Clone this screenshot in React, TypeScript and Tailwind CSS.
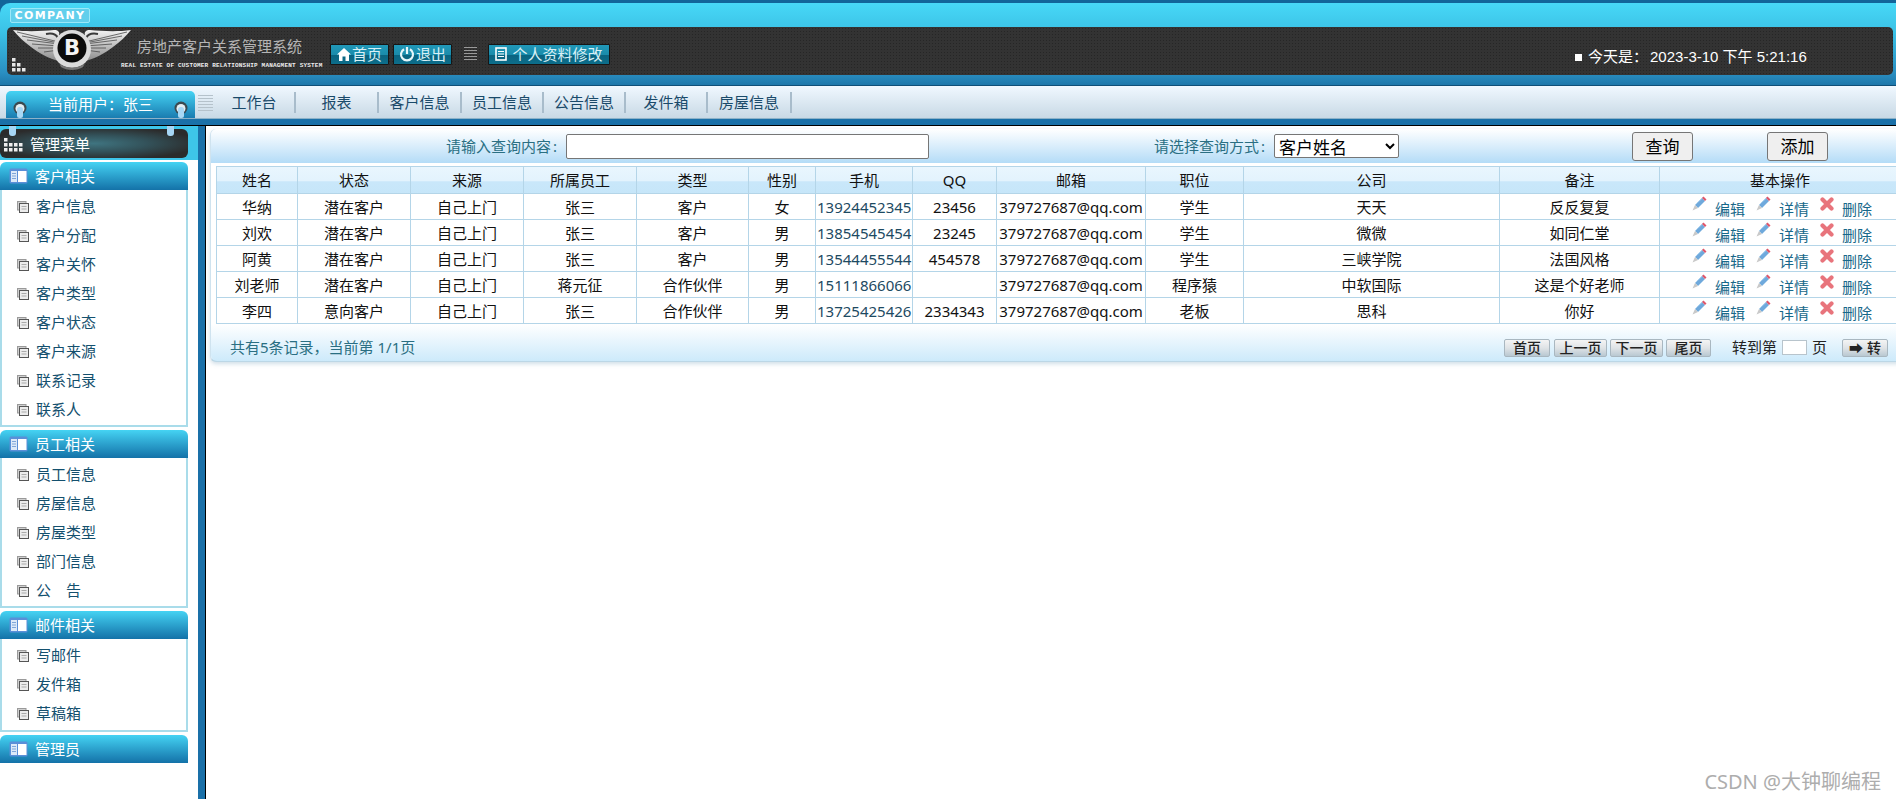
import React from "react"

const noise = "bg-[#333] bg-[radial-gradient(#262626_1px,transparent_1px)] bg-[length:3px_3px]"

const navItems = [
  { label: "工作台", w: "w-[82px]" },
  { label: "报表", w: "w-[83px]" },
  { label: "客户信息", w: "w-[83px]" },
  { label: "员工信息", w: "w-[82px]" },
  { label: "公告信息", w: "w-[82px]" },
  { label: "发件箱", w: "w-[82px]" },
  { label: "房屋信息", w: "w-[84px]" },
]

const menuGroups = [
  {
    title: "客户相关",
    body: "h-[237px] mb-[3px]",
    items: ["客户信息", "客户分配", "客户关怀", "客户类型", "客户状态", "客户来源", "联系记录", "联系人"],
  },
  {
    title: "员工相关",
    body: "h-[150px] mb-[3px]",
    items: ["员工信息", "房屋信息", "房屋类型", "部门信息", "公　告"],
  },
  {
    title: "邮件相关",
    body: "h-[93px] mb-[3px]",
    items: ["写邮件", "发件箱", "草稿箱"],
  },
]

const columns = [
  { label: "姓名", w: "w-[81px]" },
  { label: "状态", w: "w-[113px]" },
  { label: "来源", w: "w-[113px]" },
  { label: "所属员工", w: "w-[113px]" },
  { label: "类型", w: "w-[112px]" },
  { label: "性别", w: "w-[67px]" },
  { label: "手机", w: "w-[97px]" },
  { label: "QQ", w: "w-[84px]" },
  { label: "邮箱", w: "w-[149px]" },
  { label: "职位", w: "w-[98px]" },
  { label: "公司", w: "w-[256px]" },
  { label: "备注", w: "w-[160px]" },
  { label: "基本操作", w: "w-[241px]" },
]

const rows = [
  ["华纳", "潜在客户", "自己上门", "张三", "客户", "女", "13924452345", "23456", "379727687@qq.com", "学生", "天天", "反反复复"],
  ["刘欢", "潜在客户", "自己上门", "张三", "客户", "男", "13854545454", "23245", "379727687@qq.com", "学生", "微微", "如同仁堂"],
  ["阿黄", "潜在客户", "自己上门", "张三", "客户", "男", "13544455544", "454578", "379727687@qq.com", "学生", "三峡学院", "法国风格"],
  ["刘老师", "潜在客户", "自己上门", "蒋元征", "合作伙伴", "男", "15111866066", "", "379727687@qq.com", "程序猿", "中软国际", "这是个好老师"],
  ["李四", "意向客户", "自己上门", "张三", "合作伙伴", "男", "13725425426", "2334343", "379727687@qq.com", "老板", "思科", "你好"],
]

function Logo() {
  const feathers = [
    "M46 13 L4 3", "M46 14 L9 7", "M46 15 L14 11", "M46 17 L19 15", "M46 19 L25 19", "M46 21 L31 23",
  ]
  const wing = (
    <g>
      <path d="M0 1 C14 3 30 2 41 1 C45 1 47 3 46 6 L46 32 C36 30 26 24 18 18 C11 13 5 7 0 1 Z" fill="url(#wing)" />
      {feathers.map((d) => (
        <path key={d} d={d} stroke="#4a4a4a" strokeWidth="0.8" fill="none" />
      ))}
      <path d="M33 5 C38 4 43 5 45 9" stroke="#3a3a3a" strokeWidth="2" fill="none" />
    </g>
  )
  return (
    <svg width="118" height="44" viewBox="0 0 118 44" className="shrink-0 ml-[6px]">
      <defs>
        <linearGradient id="wing" x1="0" y1="0" x2="0" y2="1">
          <stop offset="0" stopColor="#f2f2f2" />
          <stop offset="1" stopColor="#8d8d8d" />
        </linearGradient>
      </defs>
      {wing}
      <g transform="translate(118 0) scale(-1 1)">{wing}</g>
      <circle cx="59" cy="20" r="19" fill="#dcdcdc" />
      <path d="M46 34 C52 40 66 40 72 34 L70 38 C64 42 54 42 48 38 Z" fill="#777" />
      <circle cx="59" cy="19" r="14.5" fill="#0b0b0b" />
      <text x="59" y="26" textAnchor="middle" fontSize="21" fontWeight="900" fill="#f4f4f4" fontFamily="'DejaVu Sans', sans-serif">
        B
      </text>
    </svg>
  )
}

function StairDots() {
  const cells = [[0, 0], [0, 5], [5, 5], [0, 10], [5, 10], [10, 10]]
  return (
    <svg width="14" height="14" viewBox="0 0 14 14" className="absolute left-[5px] bottom-[3px]">
      {cells.map(([x, y]) => (
        <rect key={`${x}-${y}`} x={x} y={y} width="3.5" height="3.5" fill="#e8e8e8" />
      ))}
    </svg>
  )
}

function Grip({ className }: { className: string }) {
  return <div className={`bg-[repeating-linear-gradient(to_bottom,var(--grip)_0px,var(--grip)_1px,transparent_1px,transparent_3px)] ${className}`} />
}

function HeadButton({ icon, label, w }: { icon: React.ReactNode; label: string; w: string }) {
  return (
    <div className={`${w} h-[21px] flex items-center justify-center gap-[1px] border border-[#161616] rounded-[1px] bg-[linear-gradient(to_bottom,#2198b8_0%,#1a8cab_50%,#0a6480_55%,#0d6e8b_100%)] text-[15px] leading-none text-[#d9f0f6]`}>
      {icon}
      <span>{label}</span>
    </div>
  )
}

function HomeIcon() {
  return (
    <svg width="14" height="13" viewBox="0 0 14 13">
      <path d="M7 0 L14 6.5 L12 6.5 L12 13 L8.5 13 L8.5 8.5 L5.5 8.5 L5.5 13 L2 13 L2 6.5 L0 6.5 Z" fill="#fff" />
    </svg>
  )
}

function PowerIcon() {
  return (
    <svg width="16" height="16" viewBox="0 0 16 16" fill="none" stroke="#e6f5f9" strokeWidth="2.2">
      <path d="M5 3.2 A6 6 0 1 0 11 3.2" />
      <path d="M8 1 L8 8" />
    </svg>
  )
}

function ListIcon() {
  return (
    <svg width="13" height="14" viewBox="0 0 13 14" className="mr-[3px]">
      <rect x="1" y="1" width="10" height="12" fill="none" stroke="#fff" strokeWidth="1.6" />
      <path d="M3 4.5 H9 M3 7 H9 M3 9.5 H9" stroke="#fff" strokeWidth="1.2" />
    </svg>
  )
}

function RingHook() {
  return (
    <svg width="16" height="17" viewBox="0 0 16 17">
      <circle cx="8" cy="7" r="6.5" fill="#3b4a50" />
      <circle cx="8" cy="7.5" r="4.5" fill="#e5eef2" />
      <rect x="5" y="6" width="6" height="11" rx="2.5" fill="#a9d8f4" />
    </svg>
  )
}

function SectionIcon() {
  return (
    <svg width="19" height="16" viewBox="0 0 19 16" className="shrink-0">
      <rect x="0.5" y="0.5" width="18" height="15" rx="1.5" fill="#5a8fd8" />
      <rect x="2" y="3" width="6" height="11" fill="#dce9f8" />
      <rect x="9" y="3" width="8.5" height="11" fill="#fff" />
      <path d="M3 5.5 H7 M3 8 H7 M3 10.5 H7" stroke="#7fa6d8" strokeWidth="1" />
    </svg>
  )
}

function PageIcon() {
  return (
    <svg width="12" height="12" viewBox="0 0 12 12" className="shrink-0">
      <rect x="0.5" y="0.5" width="8.5" height="8.5" fill="#d0d0d0" stroke="#9a9a9a" />
      <rect x="2.5" y="2.5" width="9" height="9" fill="#ececec" stroke="#555" />
      <path d="M4.5 5.5 H9.5 M4.5 8 H9.5" stroke="#aaa" strokeWidth="1" />
    </svg>
  )
}

function PencilIcon() {
  return (
    <svg width="15" height="15" viewBox="0 0 15 15" className="shrink-0 -mt-[6px]">
      <path d="M3 9 L10 2 L13 5 L6 12 Z" fill="#6fa9dc" />
      <path d="M5 7 L11 1.5" stroke="#a8d0f0" strokeWidth="1" />
      <path d="M10 2 L11.5 0.5 L14.5 3.5 L13 5 Z" fill="#e0566a" />
      <path d="M3 9 L6 12 L0.5 14.5 Z" fill="#c9c9c9" />
    </svg>
  )
}

function CrossIcon() {
  return (
    <svg width="14" height="14" viewBox="0 0 14 14" className="shrink-0 -mt-[6px]">
      <path d="M2.5 2.5 L11.5 11.5 M11.5 2.5 L2.5 11.5" stroke="#e8747c" strokeWidth="4.2" strokeLinecap="round" />
    </svg>
  )
}

function PagerButton({ children, w }: { children: React.ReactNode; w: string }) {
  return (
    <div className={`${w} h-[18px] flex items-center justify-center rounded-[2px] border border-[#a9b7c0] bg-[linear-gradient(to_bottom,#f4f4f4_0%,#dfe3e6_50%,#b9c8d2_100%)] text-[14px] leading-none font-medium text-[#222]`}>
      {children}
    </div>
  )
}

function GroupHead({ title }: { title: string }) {
  return (
    <div className="h-[28px] flex items-center pl-[9px] gap-[7px] rounded-t-[6px] bg-gradient-to-b from-[#45d3f3] to-[#1472a8] text-[15px] text-white">
      <SectionIcon />
      <span>{title}</span>
    </div>
  )
}

function Sidebar() {
  return (
    <aside className="w-[198px] shrink-0 bg-white">
      <div className="h-[34px] pt-[3px] bg-[#3ec5e9] relative">
        <div className="absolute left-[9px] top-0 w-[7px] h-[10px] rounded-b-[3px] bg-[#a6d6f5]" />
        <div className="absolute left-[167px] top-0 w-[7px] h-[10px] rounded-b-[3px] bg-[#a6d6f5]" />
        <div className="w-[188px] h-[29px] flex items-center rounded-[6px] pl-[4px] pt-[2px] bg-[#2b2b2b] bg-[radial-gradient(ellipse_at_center,#3f7480_0%,#33525a_40%,#2b2b2b_80%)] text-[15px] text-white">
          <svg width="20" height="14" viewBox="0 0 20 14" className="shrink-0">
            {[0, 5, 10].map((y) =>
              [0, 5, 10, 15].map((x) =>
                y === 0 && x > 0 ? null : <rect key={`${x}-${y}`} x={x} y={y} width="3.5" height="3.5" fill="#eee" />
              )
            )}
          </svg>
          <span className="ml-[6px]">管理菜单</span>
        </div>
      </div>
      <div className="w-[188px] pt-[2px]">
        {menuGroups.map((group) => (
          <div key={group.title}>
            <GroupHead title={group.title} />
            <ul className={`${group.body} border-x-2 border-b-2 border-[#a9dcea] bg-white pt-[2px]`}>
              {group.items.map((item) => (
                <li key={item} className="h-[29px] flex items-center pl-[15px] gap-[7px] text-[15px] text-[#14506e]">
                  <PageIcon />
                  <span>{item}</span>
                </li>
              ))}
            </ul>
          </div>
        ))}
        <GroupHead title="管理员" />
      </div>
    </aside>
  )
}

function CustomerTable() {
  return (
    <table className="w-[1684px] table-fixed border-collapse ml-[5px] text-[15px] leading-[20px] text-[#111]">
      <thead>
        <tr className="h-[27px] bg-[linear-gradient(to_bottom,#e9f6fe_0%,#e3f3fd_50%,#c9e7fa_55%,#c6e6f9_100%)]">
          {columns.map((col) => (
            <th key={col.label} className={`${col.w} border border-[#b4d5e8] font-normal text-center p-0`}>
              {col.label}
            </th>
          ))}
        </tr>
      </thead>
      <tbody>
        {rows.map((row) => (
          <tr key={row[0]} className="h-[26px] bg-white">
            {row.map((cell, i) => (
              <td
                key={i}
                className={
                  i === 6
                    ? "border border-[#b4d5e8] p-0 pl-[1px] whitespace-nowrap text-[#1d4a62]"
                    : "border border-[#b4d5e8] p-0 text-center whitespace-nowrap"
                }
              >
                {cell}
              </td>
            ))}
            <td className="border border-[#b4d5e8] p-0">
              <div className="h-[25px] flex items-center pl-[32px] text-[#17688a]">
                <PencilIcon />
                <span className="ml-[8px] mt-[5px]">编辑</span>
                <span className="ml-[11px] flex items-center"><PencilIcon /></span>
                <span className="ml-[8px] mt-[5px]">详情</span>
                <span className="ml-[11px] flex items-center"><CrossIcon /></span>
                <span className="ml-[8px] mt-[5px]">删除</span>
              </div>
            </td>
          </tr>
        ))}
      </tbody>
    </table>
  )
}

export default function App() {
  return (
    <div className="relative w-[1896px] h-[799px] overflow-hidden flex flex-col bg-white font-['Noto_Sans','Noto_Sans_CJK_SC',sans-serif]">
      {/* Header */}
      <header className="h-[86px] shrink-0 bg-[#12659a] pt-[3px] border-b border-[#0f4f78]">
        <div className="h-[82px] rounded-tl-[10px] px-[3px] bg-[linear-gradient(to_bottom,#47d8f7_0%,#3bc2e6_35%,#2a8fc2_85%,#1d77aa_100%)]">
          <div className="ml-[7px] pt-[5px]">
            <div className="w-[80px] h-[15px] flex items-center justify-center rounded-[2px] border border-[#9be8f9] bg-[#62cfec] text-[11px] leading-none font-bold tracking-[1.4px] text-white font-['DejaVu_Sans',sans-serif]">
              COMPANY
            </div>
          </div>
          <div className={`relative mt-[4px] ml-[4px] w-[1886px] h-[48px] flex items-center rounded-[5px] ${noise}`}>
            <StairDots />
            <Logo />
            <div className="w-[200px] ml-[-10px] shrink-0">
              <div className="pl-[16px] text-[15px] leading-[20px] text-[#b5b5b5] mt-[3px] whitespace-nowrap">房地产客户关系管理系统</div>
              <div className="mt-[6px] text-[6px] leading-[7px] font-bold tracking-[0.2px] text-[#eee] whitespace-nowrap font-['Liberation_Mono',monospace]">
                REAL ESTATE OF CUSTOMER RELATIONSHIP MANAGMENT SYSTEM
              </div>
            </div>
            <div className="ml-[9px] mt-[6px] flex items-center">
              <HeadButton icon={<HomeIcon />} label="首页" w="w-[59px]" />
              <div className="w-[4px]" />
              <HeadButton icon={<PowerIcon />} label="退出" w="w-[59px]" />
              <Grip className="[--grip:#9a9a9a] ml-[12px] w-[13px] h-[15px]" />
              <div className="w-[11px]" />
              <HeadButton icon={<ListIcon />} label="个人资料修改" w="w-[122px]" />
            </div>
            <div className="ml-[965px] mt-[12px] flex items-center text-[15px] text-white whitespace-nowrap font-['Liberation_Sans','Noto_Sans_CJK_SC',sans-serif]">
              <span className="w-[7px] h-[7px] bg-white mr-[6px] mt-[1px]" />
              <span>今天是：</span>
              <span className="ml-[2px]">2023-3-10 下午 5:21:16</span>
            </div>
          </div>
        </div>
      </header>

      {/* Nav bar */}
      <nav className="h-[33px] shrink-0 flex bg-gradient-to-b from-[#f0f8ff] to-[#c8d9e5] border-b border-[#8db2c8]">
        <div className="ml-[6px] mt-[5px] w-[189px] h-[27px] flex items-center justify-between px-[6px] rounded-t-[5px] bg-gradient-to-b from-[#45d3f3] to-[#1a7cb0] text-[15px] text-white">
          <span className="self-end"><RingHook /></span>
          <span>当前用户：张三</span>
          <span className="self-end"><RingHook /></span>
        </div>
        <Grip className="[--grip:#b5c2cb] ml-[3px] mt-[9px] w-[15px] h-[17px]" />
        <ul className="ml-[1px] flex items-center h-full text-[15px] text-[#1a4a6a]">
          {navItems.map((item) => (
            <li key={item.label} className={`${item.w} h-[21px] flex items-center justify-center border-r-2 border-[#a8bccb]`}>
              {item.label}
            </li>
          ))}
        </ul>
      </nav>

      <div className="h-[7px] shrink-0 bg-[#1a70a8] border-b border-black" />

      {/* Body */}
      <div className="flex-1 min-h-0 flex">
        <Sidebar />
        <div className="w-[7px] shrink-0 bg-[#1a70a8]" />
        <div className="w-px shrink-0 bg-black" />
        <main className="flex-1 min-w-0 overflow-hidden pl-[4px] pt-[3px]">
          <div className="w-[1700px] h-[233px] rounded-l-[6px] border-l border-[#cfe3ef] border-b-2 border-b-[#bcd7e6] shadow-[0_2px_4px_rgba(120,160,190,0.35)] bg-[#f2f9fe]">
            <div className="h-[34px] flex items-center rounded-tl-[6px] bg-gradient-to-b from-white to-[#b4dcf7] text-[15px] text-[#2a6f83]">
              <div className="w-[346px] text-right">请输入查询内容<span className="ml-[2px]">:</span></div>
              <input readOnly className="ml-[9px] w-[363px] h-[25px] rounded-[2px] border border-[#767676] bg-white" />
              <div className="w-[336px] text-right">请选择查询方式<span className="ml-[2px]">:</span></div>
              <select defaultValue="name" className="ml-[9px] w-[125px] h-[24px] rounded-[2px] border border-[#767676] bg-white text-[17px] leading-none text-black">
                <option value="name">客户姓名</option>
              </select>
              <button className="ml-[233px] w-[61px] h-[29px] rounded-[3px] border border-[#767676] bg-[#efefef] text-[17px] leading-none text-black">查询</button>
              <button className="ml-[74px] w-[61px] h-[29px] rounded-[3px] border border-[#767676] bg-[#efefef] text-[17px] leading-none text-black">添加</button>
            </div>
            <div className="pt-[3px] bg-white">
              <CustomerTable />
            </div>
            <div className="h-[37px] flex items-center pl-[19px] pr-[22px] rounded-bl-[6px] bg-gradient-to-b from-white to-[#cdeafb] text-[15px] text-[#2a6f83]">
              <span className="mt-[10px] whitespace-nowrap">共有5条记录，当前第 1/1页</span>
              <div className="ml-auto mt-[10px] flex items-center shrink-0 whitespace-nowrap text-[#222]">
                <PagerButton w="w-[46px]">首页</PagerButton>
                <div className="w-[4px]" />
                <PagerButton w="w-[53px]">上一页</PagerButton>
                <div className="w-[3px]" />
                <PagerButton w="w-[53px]">下一页</PagerButton>
                <div className="w-[3px]" />
                <PagerButton w="w-[45px]">尾页</PagerButton>
                <span className="ml-[21px]">转到第</span>
                <input readOnly className="ml-[5px] w-[25px] h-[15px] border border-[#b8c4cc] bg-white" />
                <span className="ml-[5px]">页</span>
                <div className="ml-[15px]">
                  <PagerButton w="w-[46px]">
                    <span className="mr-[4px]">➡</span>转
                  </PagerButton>
                </div>
              </div>
            </div>
          </div>
        </main>
      </div>

      <div className="absolute right-[15px] bottom-[5px] text-[20px] leading-[24px] text-[#adadad]">CSDN @大钟聊编程</div>
    </div>
  )
}
